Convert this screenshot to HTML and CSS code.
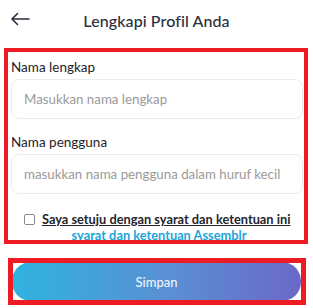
FILE: index.html
```html
<!DOCTYPE html>
<html lang="id">
<head>
<meta charset="utf-8">
<link rel="stylesheet" href="styles.css">
</head>
<body>
<div class="page">
  <header class="topbar">
    <svg class="back" width="20" height="14" viewBox="0 0 20 14"><path d="M19 7H2M7.5 1.5L2 7l5.5 5.5" fill="none" stroke="#2b2f3c" stroke-width="1.6" stroke-linecap="round" stroke-linejoin="round"/></svg>
    <h1 class="title">Lengkapi Profil Anda</h1>
  </header>
  <form class="form">
    <label class="label">Nama lengkap</label>
    <div class="input"><span class="ph">Masukkan nama lengkap</span></div>
    <label class="label second">Nama pengguna</label>
    <div class="input"><span class="ph">masukkan nama pengguna dalam huruf kecil</span></div>
    <div class="agree">
      <span class="box"></span>
      <span class="agree-text">Saya setuju dengan syarat dan ketentuan ini</span>
    </div>
    <div class="link-row"><a class="link">syarat dan ketentuan Assemblr</a></div>
  </form>
  <div class="btn-wrap"><button class="btn">Simpan</button></div>
</div>
<div class="frame frame-form"></div>
<div class="frame frame-btn"></div>
</body>
</html>
```
FILE: styles.css
```css
* { box-sizing: border-box; }
html, body { margin: 0; padding: 0; background: #fff; }
body { width: 313px; height: 308px; overflow: hidden; position: relative; font-family: Lato, "Noto Sans", sans-serif; color: #23262f; }
.page { display: flex; flex-direction: column; }
.topbar { height: 40px; display: flex; align-items: center; justify-content: center; position: relative; }
.back { position: absolute; left: 10px; top: 12px; }
.title { margin: 0; font-size: 16px; font-weight: 500; color: #2b2f3c; letter-spacing: 0.1px; }
.form { display: flex; flex-direction: column; padding: 18px 10px 0 11px; }
.label { font-size: 13.5px; line-height: 18px; color: #1f2229; }
.input { height: 40px; margin-top: 3px; border: 1px solid #ececec; border-radius: 8px; display: flex; align-items: center; padding-left: 12px; }
.ph { font-size: 13.3px; color: #9a9a9a; }
.second { margin-top: 14px; }
.agree { display: flex; align-items: center; gap: 7px; margin-top: 16px; padding-left: 13px; height: 18px; }
.box { width: 11px; height: 11px; border: 1px solid #888; border-radius: 2px; flex: none; }
.agree-text { font-size: 12.8px; font-weight: 700; text-decoration: underline; color: #24262c; }
.link-row { display: flex; justify-content: center; height: 14px; align-items: center; padding-left: 4px; }
.link { font-size: 12.8px; font-weight: 700; color: #21a6d9; text-decoration: underline; }
.btn-wrap { padding: 0 12px 0 12px; margin-top: 20px; }
.btn { width: 100%; height: 39px; border: none; border-radius: 19px; background: linear-gradient(90deg, #2fb3e0 0%, #5a8fd3 55%, #6b68c8 100%); color: #eef3fb; font-family: inherit; font-size: 13px; font-weight: 500; }
.frame { position: absolute; border-style: solid; border-color: #ed1c24; pointer-events: none; }
.frame-form { left: 4px; top: 48px; width: 304px; height: 196px; border-width: 4px; }
.frame-btn { left: 8px; top: 258px; width: 298px; height: 47px; border-width: 5px; }
```
